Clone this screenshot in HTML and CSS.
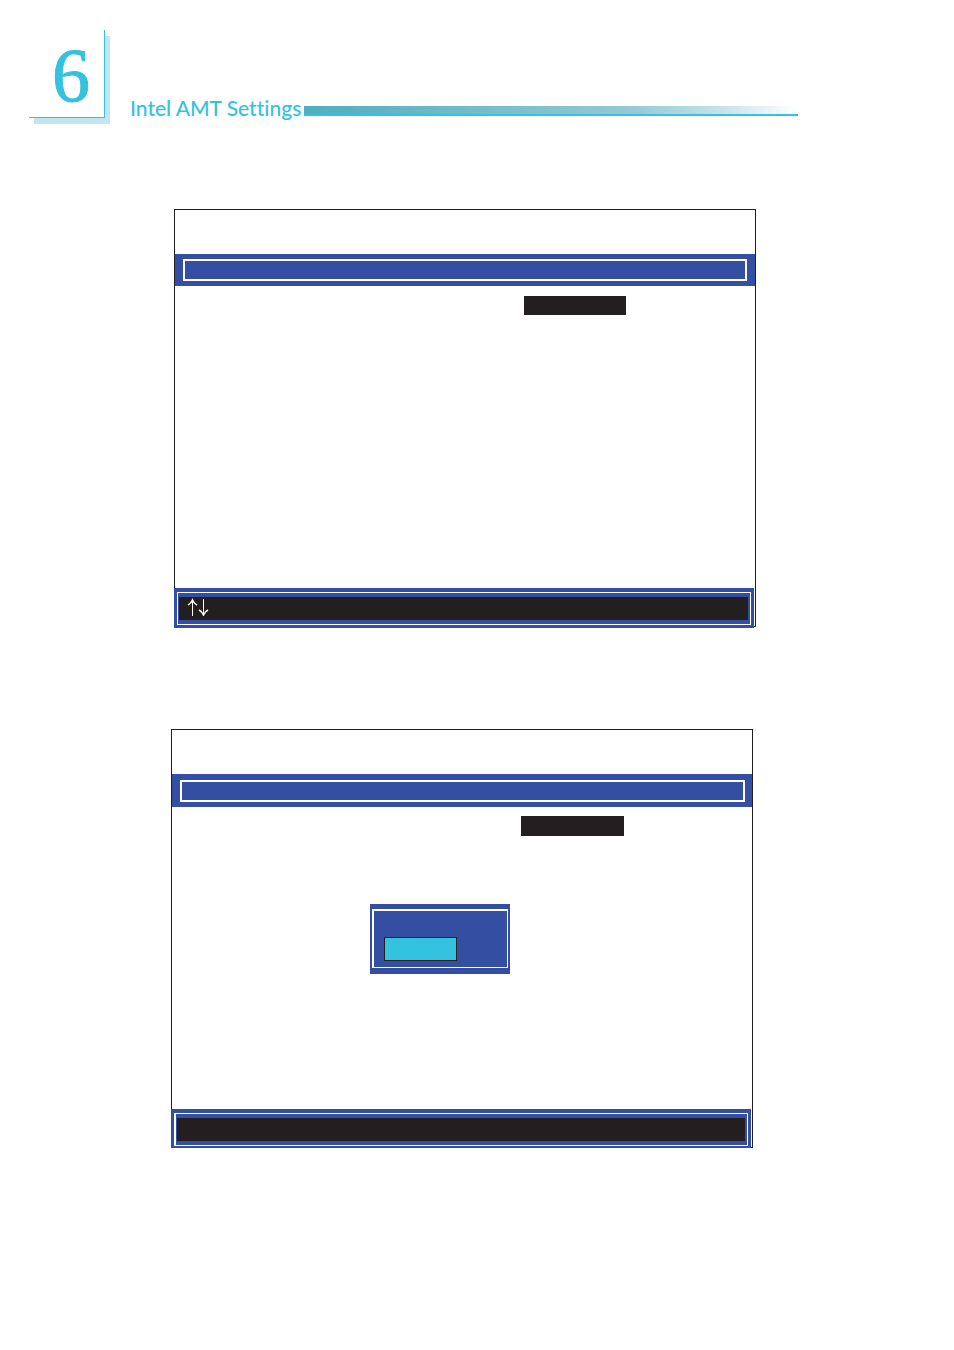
FILE: index.html
```html
<!DOCTYPE html>
<html lang="en">
<head>
<meta charset="UTF-8">
<meta name="viewport" content="width=device-width, initial-scale=1.0">
<title>Intel AMT Settings</title>
<link rel="stylesheet" href="styles.css">
</head>
<body>
  <header class="page-header">
    <div class="chapter">6</div>
    <h1>Intel AMT Settings</h1>
    <div class="rule"></div>
  </header>
  <main>
    <section class="screen">
      <div class="title-bar"><div class="title-frame"></div></div>
      <div class="screen-body">
        <div class="highlight"></div>
      </div>
      <div class="key-bar">
        <div class="key-frame">
          <div class="keys">
            <svg width="22" height="18" viewBox="0 0 22 18" fill="none" stroke="#fff" aria-hidden="true">
              <path d="M5.500 18V2M16.500 1V17" stroke-width="1"/>
              <path d="M1 7Q4 5.500 5.500 2Q7 5.500 10 7M12 12Q15 13.500 16.500 17Q18 13.500 21 12" stroke-width="1.500"/>
            </svg>
          </div>
        </div>
      </div>
    </section>
    <section class="screen screen-confirm">
      <div class="title-bar"><div class="title-frame"></div></div>
      <div class="screen-body">
        <div class="highlight"></div>
        <div class="dialog">
          <div class="dialog-frame">
            <button class="option" type="button" aria-label="Confirm"></button>
          </div>
        </div>
      </div>
      <div class="key-bar">
        <div class="key-frame">
          <div class="keys"></div>
        </div>
      </div>
    </section>
  </main>
</body>
</html>
```
FILE: styles.css
```css
* {
  box-sizing: border-box;
}
body {
  margin: 0;
  background-color: #fff;
  font-family: Lato, sans-serif;
  color: #33c2df;
}
.page-header {
  display: flex;
  align-items: flex-end;
  padding: 30px 156px 0 29px;
}
.chapter {
  width: 76px;
  height: 88px;
  padding-left: 9px;
  background-color: #fff;
  border-right: 1px solid #33c2df;
  border-bottom: 1px solid #33c2df;
  box-shadow: 5px 6px 0 #c1e6ee;
  font-family: "Liberation Serif", serif;
  font-size: 76px;
  line-height: 90px;
  text-align: center;
  -webkit-text-stroke: 1px #33c2df;
}
h1 {
  margin: 0 3px 0 25px;
  font-size: 21px;
  font-weight: 500;
  line-height: 20px;
  font-variant-ligatures: none;
  white-space: nowrap;
}
.rule {
  flex: 1;
  height: 10px;
  margin-bottom: 2px;
  background: linear-gradient(to right, #50aebd, #94c9d5 66%, #c5e1e8 84%, #fff);
  border-bottom: 2px solid #33c2df;
}

.screen {
  display: flex;
  flex-direction: column;
  margin: 91px 198px 0 174px;
  min-height: 418px;
  padding-top: 44px;
  border: 1px solid #231f20;
}
.title-bar {
  padding: 5px 8px;
  background-color: #344fa2;
}
.title-frame {
  height: 22px;
  border: 2px solid #fff;
}
.screen-body {
  position: relative;
  flex: 1;
  padding-top: 10px;
}
.highlight {
  width: 102px;
  height: 19px;
  margin-left: 349px;
  background-color: #231f20;
}

/* covers the left and bottom edge of the screen border */
.key-bar {
  margin: 0 1px -2px -1px;
  padding: 4px 3px 3px;
  background-color: #344fa2;
}
.key-frame {
  padding: 4px 2px 4px 1px;
  border: 1px solid #fff;
}
.keys {
  height: 23px;
  padding: 1px 8px;
  background-color: #231f20;
}
.keys svg {
  display: block;
}

.screen-confirm {
  margin: 102px 201px 0 171px;
  min-height: 419px;
}
.screen-confirm .title-bar {
  padding: 6px 7px 5px 8px;
}
.screen-confirm .screen-body {
  padding-top: 9px;
}
.screen-confirm .highlight {
  width: 103px;
  height: 20px;
}
.screen-confirm .key-frame {
  border-left-width: 2px;
}
.dialog {
  position: absolute;
  top: 97px;
  left: 198px;
  width: 140px;
  padding: 5px 2px 6px;
  background-color: #344fa2;
}
.dialog-frame {
  padding: 26px 10px 6px;
  border: 1px solid #fff;
  border-top-width: 2px;
  border-left-width: 2px;
}
.option {
  display: block;
  width: 73px;
  height: 24px;
  padding: 0;
  background-color: #33c2df;
  border: 1px solid #231f20;
}
```
